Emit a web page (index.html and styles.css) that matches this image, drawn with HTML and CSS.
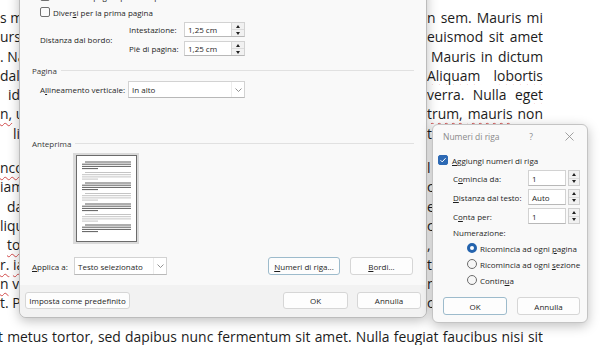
FILE: index.html
```html
<!DOCTYPE html>
<html lang="it">
<head>
    <meta charset="UTF-8">
    <meta name="viewport" content="width=device-width, initial-scale=1.0">
    <title>Imposta pagina - Numeri di riga</title>
    <link rel="stylesheet" href="styles.css">
</head>
<body>

    <!-- document text behind the dialogs -->
    <div class="doc">
        <div class="para">
            <div class="ln"><span>s mi</span><span class="r">n sem. Mauris mi</span></div>
            <div class="ln"><span>ursus</span><span class="r">euismod sit amet</span></div>
            <div class="ln"><span>. Nam</span><span class="r ra">Mauris in dictum</span></div>
            <div class="ln"><span>dales</span><span class="r"><span class="sp">Aliquam</span> <span class="sp">lobortis</span></span></div>
            <div class="ln"><span class="in2">id</span><span class="r">verra. Nulla <span class="sp">eget</span></span></div>
            <div class="ln"><span><span class="sp">n,</span> ut</span><span class="r"><span class="sp">trum,</span> <span class="sp">mauris</span> non</span></div>
            <div class="ln"><span class="in3">ligula</span><span class="r">t vitae lorem</span></div>
        </div>
        <div class="para">
            <div class="ln"><span><span class="sp">nco</span>rper</span><span class="r">l ipsum dolor</span></div>
            <div class="ln"><span>iam</span><span class="r">c nibh amet</span></div>
            <div class="ln"><span class="in1">dapibus</span><span class="r">e lorem sit</span></div>
            <div class="ln"><span>liquam</span><span class="r">c erat nunc</span></div>
            <div class="ln"><span class="in1"><span class="sp">to</span>rtor</span><span class="r">, sed ipsum</span></div>
            <div class="ln"><span><span class="sp">r.</span> <span class="sp">ia</span>culis</span><span class="r">t vitae nisi</span></div>
            <div class="ln"><span><span class="sp">n</span> vel</span><span class="r">n eget odio</span></div>
            <div class="ln"><span>t. Proin</span><span class="r">c vel massa</span></div>
        </div>
        <div class="full">t metus tortor, sed dapibus nunc fermentum sit amet. Nulla feugiat faucibus nisi sit</div>
    </div>

    <!-- Imposta pagina -->
    <div class="dialog page-setup">
        <div class="dlg-body">
            <div class="check-row"><span class="box"></span><span>Diversi tra pagine pari e dispari</span></div>
            <div class="check-row"><span class="box"></span><span>Diver<u>s</u>i per la prima pagina</span></div>
            <div class="margins">
                <span class="span2">Distanza dal bordo:</span>
                <span>Intestazione:</span>
                <div class="num"><span class="val">1,25 cm</span><span class="spin"><i class="up"></i><i class="down"></i></span></div>
                <span>Piè di pagina:</span>
                <div class="num"><span class="val">1,25 cm</span><span class="spin"><i class="up"></i><i class="down"></i></span></div>
            </div>
            <div class="group"><span>Pagina</span></div>
            <div class="align-row">
                <span>A<u>l</u>lineamento verticale:</span>
                <div class="select"><span class="val">In alto</span><span class="chev"><svg width="7" height="4" viewBox="0 0 7 4"><polyline points="0.5,0.5 3.5,3.5 6.5,0.5" fill="none" stroke="#777" stroke-width="0.8"/></svg></span></div>
            </div>
            <div class="group group-preview"><span>Anteprima</span></div>
            <div class="preview">
                <svg width="61" height="87" viewBox="0 0 61 87">
                    <rect x="0.5" y="0.5" width="60" height="86" fill="#fff" stroke="#6b6b6b"/>
                    <g fill="none" stroke-width="0.9">
                        <path stroke="#4a4a4a" d="M9 7H55M6 9.2H55M6 11.4H55M6 13.6H22"/>
                        <path stroke="#bdbdbd" d="M9 17.5H55M6 19.7H55M6 21.9H55M6 24.1H22"/>
                        <path stroke="#4a4a4a" d="M9 28H55M6 30.2H55M6 32.4H55M6 34.6H22"/>
                        <path stroke="#bdbdbd" d="M9 38.5H55M6 40.7H55M6 42.9H55M6 45.1H22"/>
                        <path stroke="#4a4a4a" d="M9 49H55M6 51.2H55M6 53.4H55M6 55.6H22"/>
                        <path stroke="#bdbdbd" d="M9 59.5H55M6 61.7H55M6 63.9H55M6 66.1H22"/>
                        <path stroke="#4a4a4a" d="M9 70H55M6 72.2H55M6 74.4H55M6 76.6H22"/>
                    </g>
                </svg>
            </div>
            <div class="apply-row">
                <span class="apply-lbl"><u>A</u>pplica a:</span>
                <div class="select select-apply"><span class="val">Testo selezionato</span><span class="chev"><svg width="7" height="4" viewBox="0 0 7 4"><polyline points="0.5,0.5 3.5,3.5 6.5,0.5" fill="none" stroke="#777" stroke-width="0.8"/></svg></span></div>
                <div class="btns">
                    <button class="btn btn-focus btn-lines"><u>N</u>umeri di riga...</button>
                    <button class="btn btn-borders"><u>B</u>ordi...</button>
                </div>
            </div>
        </div>
        <div class="dlg-foot">
            <button class="btn btn-default">Imposta come predefinito</button>
            <div class="btns">
                <button class="btn btn-ok">OK</button>
                <button class="btn btn-cancel">Annulla</button>
            </div>
        </div>
    </div>

    <!-- Numeri di riga -->
    <div class="dialog line-numbers">
        <div class="title">
            <span class="title-text">Numeri di riga</span>
            <span class="title-btn">?</span>
            <span class="title-btn"><svg width="9" height="9" viewBox="0 0 9 9"><path d="M0.5 0.5L8.5 8.5M8.5 0.5L0.5 8.5" stroke="#8a8a8a" stroke-width="0.8"/></svg></span>
        </div>
        <div class="check-row check-on"><span class="box"><svg width="8" height="8" viewBox="0 0 8 8"><polyline points="1.5,4.2 3.2,5.9 6.6,2.2" fill="none" stroke="#fff" stroke-width="1"/></svg></span><span><u>A</u>ggiungi numeri di riga</span></div>
        <div class="fields">
            <span>C<u>o</u>mincia da:</span>
            <span class="box-val">1</span>
            <span class="spin spin-sep"><i class="up"></i><i class="down"></i></span>
            <span><u>D</u>istanza dal testo:</span>
            <span class="box-val">Auto</span>
            <span class="spin spin-sep"><i class="up"></i><i class="down"></i></span>
            <span>C<u>o</u>nta per:</span>
            <span class="box-val">1</span>
            <span class="spin spin-sep"><i class="up"></i><i class="down"></i></span>
        </div>
        <div class="numbering">Numerazione:</div>
        <div class="radios">
            <div class="radio-row"><span class="radio on"></span><span>Ricomincia ad ogni <u>p</u>agina</span></div>
            <div class="radio-row"><span class="radio"></span><span>Ricomincia ad ogni <u>s</u>ezione</span></div>
            <div class="radio-row"><span class="radio"></span><span>Contin<u>u</u>a</span></div>
        </div>
        <div class="dlg-buttons">
            <button class="btn btn-focus btn-ok2">OK</button>
            <button class="btn btn-cancel2">Annulla</button>
        </div>
    </div>

</body>
</html>
```

FILE: styles.css
```css
* {
    box-sizing: border-box;
}
body {
    margin: 0;
    width: 610px;
    height: 345px;
    overflow: hidden;
    position: relative;
    background: #fff;
    font-family: "Open Sans", sans-serif;
    color: #1c1c1c;
}

/* document */
.doc {
    padding-top: 8px;
    font-size: 13.9px;
    line-height: 19.3px;
}
.para {
    margin-bottom: 15px;
}
.ln {
    display: flex;
    justify-content: space-between;
    width: 543px;
    height: 19.3px;
}
.ln > span:first-child {
    white-space: nowrap;
}
.ln .r {
    width: 116px;
    height: 19.3px;
    overflow: hidden;
    text-align: justify;
    text-align-last: justify;
}
.ln .ra {
    padding-left: 4px;
}
.in1 { padding-left: 7px; }
.in2 { padding-left: 8px; }
.in3 { padding-left: 13px; }
.full {
    width: 545px;
    margin-left: -2px;
    height: 19.3px;
    overflow: hidden;
    text-align: justify;
    text-align-last: justify;
}
.sp {
    text-decoration: underline wavy #d24a4a;
    text-decoration-thickness: 1px;
    text-underline-offset: 3px;
}

/* dialogs */
.dialog {
    position: absolute;
    background: #f9f9f9;
    border: 1px solid #bcbcbc;
    box-shadow: 0 3px 12px rgba(0, 0, 0, 0.25);
    font-size: 8px;
    color: #1f1f1f;
    display: flex;
    flex-direction: column;
}
.dialog u {
    text-underline-offset: 1px;
    text-decoration-thickness: 0.6px;
}
.page-setup {
    left: 19px;
    top: -13px;
    width: 408px;
    height: 331px;
    border-radius: 0 0 7px 7px;
}
.dlg-body {
    flex: 1;
    padding: 0 12px;
}
.check-row {
    display: flex;
    align-items: center;
    gap: 3px;
    height: 16px;
    margin-left: 8px;
}
.box {
    width: 10px;
    height: 10px;
    flex-shrink: 0;
    border: 1px solid #707070;
    border-radius: 2px;
    background: #fbfbfb;
    display: flex;
    align-items: center;
    justify-content: center;
}
.margins {
    margin: 2px 0 0 8px;
    display: grid;
    grid-template-columns: 89px 55px 61px;
    grid-template-rows: 15px 15px;
    row-gap: 4px;
    align-items: center;
}
.span2 {
    grid-row: 1 / 3;
}
.num, .select {
    display: flex;
    height: 100%;
    background: #fff;
    border: 1px solid #d2d2d2;
    border-bottom-color: #b8b8b8;
}
.num .val, .select .val {
    flex: 1;
    padding-left: 3px;
    display: flex;
    align-items: center;
}
.spin {
    width: 13px;
    display: flex;
    flex-direction: column;
    background: #f1f1f1;
    border-left: 1px solid #d6d6d6;
}
.spin i {
    flex: 1;
    display: flex;
    align-items: center;
    justify-content: center;
}
.spin i + i {
    border-top: 1px solid #dcdcdc;
}
.spin .up::before {
    content: "";
    border-left: 2.5px solid transparent;
    border-right: 2.5px solid transparent;
    border-bottom: 3px solid #222;
}
.spin .down::before {
    content: "";
    border-left: 2.5px solid transparent;
    border-right: 2.5px solid transparent;
    border-top: 3px solid #222;
}
.group {
    display: flex;
    align-items: center;
    gap: 4px;
    height: 12px;
    margin-top: 8px;
    color: #3a3a3a;
}
.group::after {
    content: "";
    flex: 1;
    height: 1px;
    background: #e1e1e1;
}
.group-preview {
    margin-top: 39px;
}
.align-row {
    display: grid;
    grid-template-columns: 88px 117px;
    align-items: center;
    height: 17px;
    margin: 5px 0 0 8px;
}
.chev {
    width: 13px;
    display: flex;
    align-items: center;
    justify-content: center;
    border-left: 1px solid #ececec;
}
.preview {
    margin: 4px 0 0 41px;
    width: 66px;
    height: 91px;
    padding: 2px 2px 2px 3px;
    background: #dadada;
}
.preview svg {
    display: block;
}
.apply-row {
    display: flex;
    align-items: center;
    height: 18px;
    margin-top: 13px;
}
.apply-lbl {
    width: 42px;
}
.select-apply {
    width: 93px;
}
.btns {
    display: flex;
    gap: 9px;
    margin-left: auto;
    height: 100%;
}
.apply-row .btns {
    gap: 10px;
    margin-right: 1px;
}
.btn {
    font: inherit;
    color: inherit;
    background: #fdfdfd;
    border: 1px solid #d6d6d6;
    border-radius: 3px;
    padding: 0;
    height: 100%;
}
.btn-focus {
    border-color: #9dbbcc;
}
.btn-lines { width: 72px; }
.btn-borders { width: 63px; }
.dlg-foot {
    display: flex;
    height: 32px;
    padding: 7px 5px 8px 5px;
    background: #f2f2f2;
    border-radius: 0 0 7px 7px;
}
.btn-default { width: 105px; }
.btn-ok { width: 65px; }
.btn-cancel { width: 64px; }

/* line numbers dialog */
.line-numbers {
    left: 432px;
    top: 124px;
    width: 156px;
    height: 199px;
    border-radius: 6px;
    border-color: #c4c4c4;
}
.title {
    display: flex;
    align-items: center;
    height: 23px;
    padding: 0 8px 0 10px;
    color: #8a8a8a;
    font-size: 8.5px;
}
.title-btn {
    width: 20px;
    display: flex;
    justify-content: center;
}
.title-text {
    margin-right: auto;
}
.title-btn + .title-btn {
    margin-left: 18px;
}
.line-numbers .check-row {
    margin: 4px 0 0 5px;
    gap: 4px;
}
.check-on .box {
    background: #2d69b4;
    border-color: #2d69b4;
}
.fields {
    display: grid;
    grid-template-columns: 73px 38px 12px;
    grid-auto-rows: 16px;
    column-gap: 2px;
    row-gap: 3px;
    align-items: center;
    margin-top: 2px;
    padding-left: 20px;
}
.box-val {
    height: 100%;
    display: flex;
    align-items: center;
    padding-left: 3px;
    background: #fff;
    border: 1px solid #d2d2d2;
    border-bottom-color: #b8b8b8;
}
.spin-sep {
    width: 12px;
    height: 100%;
    border: 1px solid #cfcfcf;
}
.numbering {
    height: 12px;
    line-height: 12px;
    margin-top: 3px;
    padding-left: 20px;
}
.radios {
    margin-top: 1px;
    padding-left: 34px;
}
.radio-row {
    display: flex;
    align-items: center;
    gap: 3px;
    height: 16px;
}
.radio {
    width: 10px;
    height: 10px;
    flex-shrink: 0;
    border-radius: 50%;
    border: 1px solid #6c6c6c;
    background: #f6f6f6;
}
.radio.on {
    border: 3px solid #2463ad;
    background: #fff;
}
.dlg-buttons {
    display: flex;
    gap: 10px;
    height: 18px;
    margin-top: 9px;
    padding-left: 10px;
}
.btn-ok2 { width: 64px; }
.btn-cancel2 { width: 63px; }
```
